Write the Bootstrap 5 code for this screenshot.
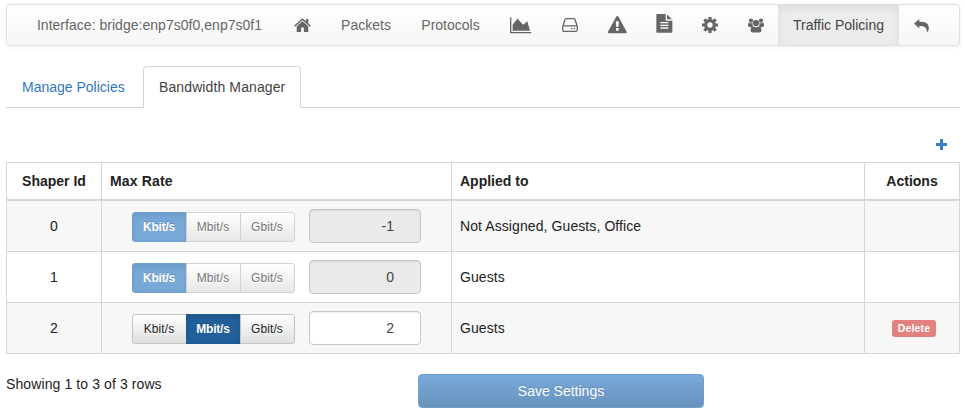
<!DOCTYPE html>
<html lang="en">
<head>
<meta charset="utf-8">
<meta name="viewport" content="width=device-width, initial-scale=1">
<title>Traffic Policing</title>
<link href="https://cdn.jsdelivr.net/npm/bootstrap@5.3.0/dist/css/bootstrap.min.css" rel="stylesheet">
<style>
body{font:14px/20px "Liberation Sans",Arial,sans-serif;color:#333;padding:4px 5px 0 6px;overflow:hidden;background:#fff}
.topbar{height:42px;padding:0 0 0 14px;border:1px solid #e0e0e0;border-radius:4px;background:linear-gradient(#fff,#f6f6f6);box-shadow:0 1px 4px rgba(0,0,0,.07)}
.topbar .nav-link{height:40px;padding:0;color:#666;display:flex;align-items:center;justify-content:center;white-space:nowrap}
.topbar .nav-link.active{color:#444;background:#ececec;box-shadow:inset 0 3px 9px rgba(0,0,0,.075)}
.topbar svg{fill:currentColor;display:block}
.w-if{width:257px;letter-spacing:.03px}.w-pk{width:80px}.w-pr{width:89px}.w-ch{width:52px}.w-wr{width:49px}.w-tp{width:121px}
.w-ho{width:48px}.w-ic{width:46px}.w-fi{width:45px}
.topbar .w-ho{padding-left:1px}
.topbar .w-doc{padding-bottom:3px}
.topbar .w-back{padding-right:2px}
.policy-tabs{margin-top:20px;height:42px;--bs-nav-tabs-border-color:#d5d5d5;--bs-nav-tabs-border-radius:4px}
.policy-tabs .nav-link{height:42px;padding:10px 15px;color:#3078c2;white-space:nowrap}
.policy-tabs .nav-link.active{color:#444;border-color:#d5d5d5 #d5d5d5 #fff;letter-spacing:.11px}
.tab-first{width:137px}.tab-second{width:158px}
.add-row{height:54px;padding:31px 13px 0 0}
.shapers{width:953px;table-layout:fixed;border-collapse:collapse;--bs-table-striped-bg:#f7f7f7;--bs-table-color:#222;--bs-table-striped-color:#222;border-color:#d6d6d6;color:#222}
.shapers th{height:37px;padding:0 8px;border-bottom:2px solid #d6d6d6!important;vertical-align:middle}
.shapers th:nth-child(2){letter-spacing:.17px}
.shapers td{height:51px;padding:0 8px;vertical-align:middle}
.shapers tbody tr:first-child td{height:52px;padding-top:1px}
.shapers td:nth-child(3){letter-spacing:.09px}
.shapers .rate{padding-left:30px}
.shapers .act{padding:0 6px 2px 8px}
.rate-btns{width:163px;height:30px;margin-top:2px;border-radius:3px}
.rate-btns .btn{width:55px;flex:none;padding:0 1px 0 0;font-size:12px;line-height:26px;color:#222;border:1px solid #c4c4c4;background:linear-gradient(#fff,#dfdfdf);text-shadow:0 1px 0 #fff;border-radius:3px;letter-spacing:.1px}
.rate-btns .btn.chosen{color:#fff;font-weight:bold;border-color:#1d5a94;background:#22609c;text-shadow:0 -1px 0 rgba(0,0,0,.2);box-shadow:inset 0 3px 5px rgba(0,0,0,.125);letter-spacing:-.2px}
.rate-btns .btn:disabled{color:#777;border-color:#d2d2d2;background:linear-gradient(#fff,#e7e7e7);opacity:1}
.rate-btns .btn.chosen:disabled{color:#fff;border-color:#6d9fd0;background:#77a8d8;box-shadow:inset 0 3px 5px rgba(0,0,0,.08)}
.rate-value{width:112px;height:34px;margin-left:14px;padding:6px 26px 6px 12px;font-size:14px;line-height:20px;text-align:right;color:#444;border:1px solid #c6c6c6;border-radius:4px;box-shadow:inset 0 1px 1px rgba(0,0,0,.075)}
.rate-value:disabled{background:#eaeaea;color:#444}
.del{font-size:10.5px;line-height:17px;width:44px;height:17px;margin-left:2px;padding:0;background:#e4807e;border-radius:3px;display:inline-block;vertical-align:middle;letter-spacing:.15px}
.foot{margin-top:20px}
.foot-text{width:412px;color:#222;letter-spacing:.1px}
.save{width:286px;height:34px;padding:0;font-size:14px;line-height:32px;color:#fff;border:1px solid #709fcb;border-radius:4px;background:linear-gradient(#77a9da,#6993bd);text-shadow:0 -1px 0 rgba(0,0,0,.15)}
.save:disabled{color:#fff;opacity:1;border-color:#709fcb}
</style>
<script src="https://cdn.jsdelivr.net/npm/bootstrap@5.3.0/dist/js/bootstrap.bundle.min.js"></script>
</head>
<body>
<nav class="topbar nav flex-nowrap">
<span class="nav-link w-if">Interface: bridge:enp7s0f0,enp7s0f1</span>
<a class="nav-link w-ho" href="#"><svg width="17" height="16" viewBox="0 0 17 16"><path d="M8.500 1.200 0 8.800l.9 1L8.500 3.200l7.600 6.600.9-1-2.700-2.500V1.900h-2.200v2.400zM8.500 4.300 2.700 9.300V15h4.400v-4.400h2.800V15h4.400V9.300z"/></svg></a>
<a class="nav-link w-pk" href="#">Packets</a>
<a class="nav-link w-pr" href="#">Protocols</a>
<a class="nav-link w-ch" href="#"><svg width="21.300" height="18.700" viewBox="0 0 2048 1792"><path d="M2048 1536v128H0V128h128v1408zM1664 512l256 896H256V832l448-576 576 576z"/></svg></a>
<a class="nav-link w-ic" href="#"><svg width="16" height="14" viewBox="0 0 16 14"><path fill="none" stroke="currentColor" stroke-width="1.300" d="M.7 8.700 2.900 1.800Q3.200.7 4.200.7h7.600q1 0 1.300 1.100l2.200 6.900v3.100q0 1.500-1.500 1.500H2.200q-1.500 0-1.500-1.500zM1 7.900h14"/><path d="M9 10h1.300v1.300H9zm2.700 0H13v1.300h-1.300z"/></svg></a>
<a class="nav-link w-wr" href="#"><svg width="18.700" height="18.700" viewBox="0 0 1792 1792"><path d="M1024 1375v-190q0-14-9.500-23.500t-22.500-9.500h-192q-13 0-22.500 9.500t-9.500 23.500v190q0 14 9.500 23.500t22.500 9.500h192q13 0 22.500-9.500t9.500-23.500zm-2-374l18-459q0-12-10-19-13-11-24-11h-220q-11 0-24 11-10 7-10 21l17 457q0 10 10 16.500t24 6.500h185q14 0 23.500-6.500t10.500-16.500zm-14-934l768 1408q35 63-2 126-17 29-46.500 46t-63.500 17h-1536q-34 0-63.500-17t-46.500-46q-37-63-2-126l768-1408q17-31 47-49t65-18 65 18 47 49z"/></svg></a>
<a class="nav-link w-fi w-doc" href="#"><svg width="18.700" height="18.700" viewBox="0 0 1792 1792"><path d="M1596 476q14 14 28 36h-472v-472q22 14 36 28zm-476 164h544v1056q0 40-28 68t-68 28h-1344q-40 0-68-28t-28-68v-1600q0-40 28-68t68-28h800v544q0 40 28 68t68 28zm160 736v-64q0-14-9-23t-23-9h-704q-14 0-23 9t-9 23v64q0 14 9 23t23 9h704q14 0 23-9t9-23zm0-256v-64q0-14-9-23t-23-9h-704q-14 0-23 9t-9 23v64q0 14 9 23t23 9h704q14 0 23-9t9-23zm0-256v-64q0-14-9-23t-23-9h-704q-14 0-23 9t-9 23v64q0 14 9 23t23 9h704q14 0 23-9t9-23z"/></svg></a>
<a class="nav-link w-ic" href="#"><svg width="16" height="16" viewBox="-8 -8 16 16"><g fill="none" stroke="currentColor"><circle r="4.300" stroke-width="3.300"/><path stroke-width="3.200" d="M0-8v3M0 8V5M-8 0h3M8 0H5M-5.700-5.700l2 2M5.700 5.700l-2-2M-5.700 5.700l2-2M5.700-5.700l-2 2"/></g></svg></a>
<a class="nav-link w-fi" href="#"><svg width="16" height="15" viewBox="0 0 16 15"><circle cx="3" cy="2.700" r="2.100"/><circle cx="13" cy="2.700" r="2.100"/><circle cx="8" cy="5" r="3.100"/><path d="M0 8V6.500Q0 4.700 1 4.700q2 1 3.500.2Q4.300 7 5 8q-1 .2-1.700 1H1.500Q0 9 0 8zM16 8V6.500q0-1.800-1-1.800-2 1-3.500.2.200 2.100-.5 3.100 1 .2 1.700 1h1.800Q16 9 16 8zM2.500 12.500q0-4.300 2.500-4.300 3 2 6 0 2.500 0 2.500 4.300 0 2-2 2h-7q-2 0-2-2z"/></svg></a>
<a class="nav-link active w-tp" href="#">Traffic Policing</a>
<a class="nav-link w-ic w-back" href="#"><svg width="15" height="13" viewBox="0 0 15 13"><path d="M0 4.500 5.300 0v2.800h2.200q7.300.2 7.300 6.300 0 2-.8 3.700h-1q-.6-5.600-5.500-5.700H5.300v2.400z"/></svg></a>
</nav>
<ul class="nav nav-tabs policy-tabs">
<li class="nav-item tab-first"><a class="nav-link" href="#">Manage Policies</a></li>
<li class="nav-item tab-second"><a class="nav-link active" href="#">Bandwidth Manager</a></li>
</ul>
<div class="add-row d-flex justify-content-end"><svg width="11" height="11" viewBox="0 0 11 11"><path fill="#337fc7" d="M4 0h3v4h4v3H7v4H4V7H0V4h4z"/></svg></div>
<table class="table table-bordered table-striped shapers mb-0">
<colgroup><col style="width:95px"><col style="width:350px"><col style="width:413px"><col style="width:95px"></colgroup>
<thead><tr><th class="text-center">Shaper Id</th><th>Max Rate</th><th>Applied to</th><th class="text-center">Actions</th></tr></thead>
<tbody>
<tr><td class="text-center">0</td><td class="rate"><div class="d-flex align-items-center"><div class="btn-group rate-btns"><button class="btn chosen" disabled>Kbit/s</button><button class="btn" disabled>Mbit/s</button><button class="btn" disabled>Gbit/s</button></div><input class="form-control rate-value" value="-1" disabled></div></td><td>Not Assigned, Guests, Office</td><td></td></tr>
<tr><td class="text-center">1</td><td class="rate"><div class="d-flex align-items-center"><div class="btn-group rate-btns"><button class="btn chosen" disabled>Kbit/s</button><button class="btn" disabled>Mbit/s</button><button class="btn" disabled>Gbit/s</button></div><input class="form-control rate-value" value="0" disabled></div></td><td>Guests</td><td></td></tr>
<tr><td class="text-center">2</td><td class="rate"><div class="d-flex align-items-center"><div class="btn-group rate-btns"><button class="btn">Kbit/s</button><button class="btn chosen">Mbit/s</button><button class="btn">Gbit/s</button></div><input class="form-control rate-value" value="2"></div></td><td>Guests</td><td class="text-center act"><a class="badge del text-white text-decoration-none" href="#">Delete</a></td></tr>
</tbody>
</table>
<div class="foot d-flex"><div class="foot-text">Showing 1 to 3 of 3 rows</div><button class="btn save" disabled>Save Settings</button></div>
</body>
</html>
